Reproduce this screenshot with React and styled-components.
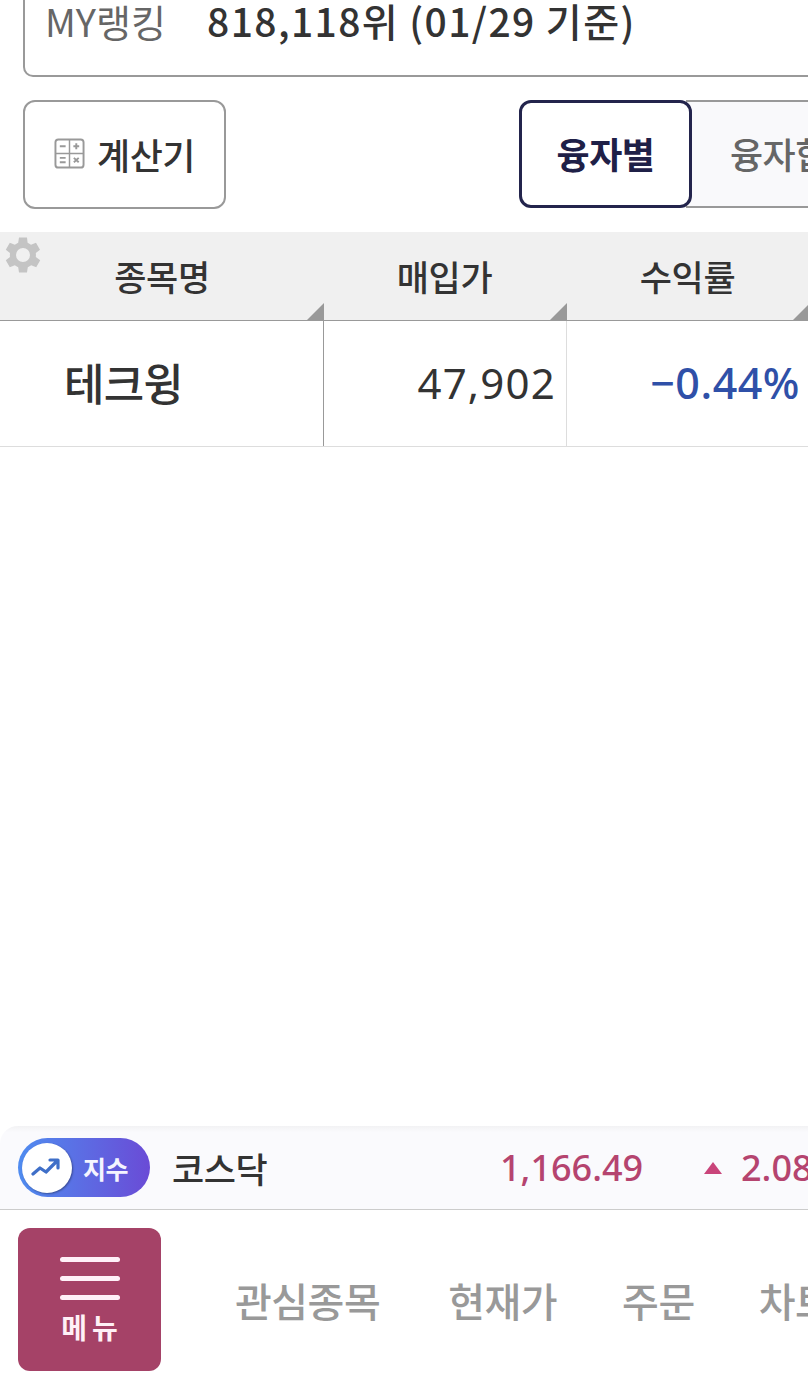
import React from "react";
import styled, { createGlobalStyle } from "styled-components";

const Global = createGlobalStyle`
  html, body { margin: 0; padding: 0; background: #fff; }
  * { box-sizing: border-box; }
  body { font-family: "Noto Sans CJK KR", "Noto Sans", sans-serif; color: #333; }
`;
const Page = styled.div`
  width: 808px; height: 1389px; overflow: hidden; display: flex; flex-direction: column; background: #fff;
`;
const RankBox = styled.div`
  width: 820px; height: 77px; margin-left: 23px; flex: none;
  border: 2px solid #999; border-top: none; border-radius: 0 0 10px 10px;
  display: flex; align-items: flex-start; padding-left: 20px; line-height: 41px;
`;
const RankLabel = styled.span`
  flex: none; font-size: 38px; color: #666; width: 162px; letter-spacing: 0; white-space: nowrap;
`;
const RankValue = styled.span`
  font-size: 39px; font-weight: 500; color: #333; white-space: nowrap; letter-spacing: 1.4px;
`;
const Controls = styled.div`
  flex: none; height: 109px; margin-top: 23px; padding-left: 23px;
  display: flex; justify-content: space-between; align-items: stretch; width: 808px;
`;
const CalcButton = styled.div`
  width: 203px; border: 2px solid #999; border-radius: 12px; display: flex; align-items: center; justify-content: center; gap: 12px;
  padding-bottom: 2px; font-size: 36px; font-weight: 500; color: #333; letter-spacing: -0.5px; white-space: nowrap;
`;
const Tabs = styled.div`
  width: 289px; display: flex; overflow: hidden; height: 108px;
`;
const Tab = styled.div`
  flex: none; width: ${p => p.$active ? 173 : 200}px; display: flex; align-items: center;
  justify-content: ${p => p.$active ? "center" : "flex-start"};
  padding-bottom: 2px; font-size: 36px; letter-spacing: -0.5px; white-space: nowrap;
  font-weight: ${p => p.$active ? 700 : 500};
  color: ${p => p.$active ? "#1f2047" : "#666"};
  background: ${p => p.$active ? "#fff" : "#f9f9fb"};
  border: ${p => p.$active ? "3px solid #23244c" : "2px solid #999"};
  border-radius: ${p => p.$active ? "12px" : "0"};
  ${p => !p.$active && "border-left: none; border-right: none; margin-left: -6px; padding-left: 44px;"}
  position: relative; z-index: ${p => p.$active ? 1 : 0};
`;
const Grid = styled.div`
  display: grid; grid-template-columns: 324px 243px 243px; width: 810px;
`;
const HeadRow = styled(Grid)`
  flex: none; margin-top: 23px; height: 89px; background: #f0f0f0; border-bottom: 1px solid #999;
`;
const HeadCell = styled.div`
  position: relative; display: flex; justify-content: center; padding-top: 20px; padding-right: ${p => p.$pr || 0}px;
  font-size: 35px; font-weight: 500; line-height: 48px; color: #333; letter-spacing: -0.4px;
`;
const Corner = styled.i`
  position: absolute; right: 0; bottom: 0; width: 0; height: 0; border-style: solid;
  border-width: 0 0 17px 17px; border-color: transparent transparent #999 transparent;
`;
const Gear = styled.svg`
  position: absolute; left: 5px; top: 5px; width: 36px; height: 36px; fill: #c4c4c4;
`;
const BodyRow = styled(Grid)`
  flex: none; height: 126px; border-bottom: 1px solid #ddd;
`;
const NameCell = styled.div`
  border-right: 1px solid #999; display: flex; align-items: center; padding-left: 64px; padding-bottom: 3px;
  font-size: 44px; font-weight: 500; color: #333; letter-spacing: -0.8px; white-space: nowrap;
`;
const NumCell = styled.div`
  display: flex; align-items: center; justify-content: flex-end; padding-bottom: 3px; padding-right: ${p => p.$pr}px;
  font-size: ${p => p.$size}px; color: ${p => p.$color}; border-right: 1px solid ${p => p.$line}; font-weight: ${p => p.$weight};
  letter-spacing: ${p => p.$ls}; white-space: nowrap; font-family: "Noto Sans", sans-serif;
`;
const Spacer = styled.div`flex: 1;`;
const Ticker = styled.div`
  flex: none; height: 84px; background: linear-gradient(180deg, #f2f2f4 0, #fafafd 6px); border-bottom: 1px solid #ccc;
  border-top-left-radius: 18px;
  display: flex; align-items: center; padding-left: 18px; white-space: nowrap; width: 808px; overflow: hidden;
`;
const IndexPill = styled.div`
  flex: none; width: 132px; height: 59px; border-radius: 30px; background: linear-gradient(90deg, #4f8cf0, #6a4bd6);
  display: flex; align-items: center; padding-left: 4px; gap: 11px; color: #f4f4ff; font-size: 25px; font-weight: 700; letter-spacing: -0.5px;
`;
const IconDisc = styled.div`
  flex: none; width: 50px; height: 50px; border-radius: 50%; background: #fff; display: flex; align-items: center; justify-content: center;
  box-shadow: 1px 1px 2px rgba(0,0,0,.35);
`;
const TickerName = styled.span`
  flex: none; width: 328px; margin-left: 22px; font-size: 35px; font-weight: 500; color: #333; letter-spacing: -0.5px;
`;
const TickerValue = styled.span`
  flex: none; width: ${p => p.$w}px; font-size: 36px; font-weight: 500; color: #b5446f; font-family: "Noto Sans", sans-serif;
`;
const UpArrow = styled.i`
  flex: none; width: 0; height: 0; border-style: solid; border-width: 0 9px 12px 9px; border-color: transparent transparent #c9447a transparent; margin-right: 19px;
`;
const Nav = styled.div`
  flex: none; height: 179px; display: flex; align-items: center; padding-left: 18px; white-space: nowrap; width: 808px; overflow: hidden;
`;
const MenuButton = styled.div`
  flex: none; width: 143px; height: 143px; border-radius: 12px; background: #a54267; display: flex; flex-direction: column; align-items: center;
  padding-top: 29px; color: #fff0f6;
`;
const MenuBar = styled.span`
  display: block; width: 60px; height: 5px; border-radius: 3px; background: #fff0f8; margin-bottom: 14px;
`;
const MenuLabel = styled.span`
  font-size: 28px; font-weight: 700; line-height: 32px; letter-spacing: 5px; margin-top: -3px; padding-left: 5px;
`;
const NavItem = styled.span`
  flex: none; margin-left: ${p => p.$ml}px; font-size: 40px; font-weight: 500; color: #999; letter-spacing: -0.5px;
`;

const GearPath = "M19.4 13a7.5 7.5 0 0 0 0-2l2.1-1.6-2-3.5-2.5 1a7.6 7.6 0 0 0-1.7-1L15 3.2h-4l-.4 2.7a7.6 7.6 0 0 0-1.7 1l-2.5-1-2 3.5L6.5 11a7.5 7.5 0 0 0 0 2l-2.1 1.6 2 3.5 2.5-1a7.6 7.6 0 0 0 1.7 1l.4 2.7h4l.4-2.7a7.6 7.6 0 0 0 1.7-1l2.5 1 2-3.5zM13 15.5a3.5 3.5 0 1 1 0-7 3.5 3.5 0 0 1 0 7z";

export default function App() {
  return (
    <Page>
      <Global />
      <RankBox>
        <RankLabel>MY랭킹</RankLabel>
        <RankValue>818,118위 (01/29 기준)</RankValue>
      </RankBox>
      <Controls>
        <CalcButton>
          <svg width="31" height="31" viewBox="0 0 32 32" fill="none" stroke="#999" strokeWidth="2">
            <rect x="1.5" y="1.5" width="29" height="29" rx="3" />
            <path d="M16 1.5v29M1.5 16h29" strokeWidth="1.5" />
            <path d="M6 8.5h6M20 8.5h6M23 5.5v6M6 20.5h6M6 25h6M20.5 20.5l5 4.5M25.5 20.5l-5 4.5" />
          </svg>
          계산기
        </CalcButton>
        <Tabs>
          <Tab $active>융자별</Tab>
          <Tab>융자합</Tab>
        </Tabs>
      </Controls>
      <HeadRow>
        <HeadCell>
          <Gear viewBox="4 3 18 18"><path d={GearPath} fillRule="evenodd" /></Gear>
          종목명<Corner />
        </HeadCell>
        <HeadCell $pr={2}>매입가<Corner /></HeadCell>
        <HeadCell $pr={2}>수익률<Corner /></HeadCell>
      </HeadRow>
      <BodyRow>
        <NameCell>테크윙</NameCell>
        <NumCell $pr={10} $size={42} $weight={400} $color="#333" $line="#ddd" $ls="1.2px">47,902</NumCell>
        <NumCell $pr={9} $size={43} $weight={500} $color="#2f50a8" $line="transparent" $ls="0.5px">−0.44%</NumCell>
      </BodyRow>
      <Spacer />
      <Ticker>
        <IndexPill>
          <IconDisc>
            <svg width="32" height="24" viewBox="0 0 32 24" fill="none" stroke="#3f6fc8" strokeWidth="3.2" strokeLinecap="round" strokeLinejoin="round">
              <path d="M2 18l7-6 6 4 11-11M19 4h8v8" />
            </svg>
          </IconDisc>
          지수
        </IndexPill>
        <TickerName>코스닥</TickerName>
        <TickerValue $w={204}>1,166.49</TickerValue>
        <UpArrow />
        <TickerValue $w={100}>2.08</TickerValue>
      </Ticker>
      <Nav>
        <MenuButton>
          <MenuBar /><MenuBar /><MenuBar />
          <MenuLabel>메뉴</MenuLabel>
        </MenuButton>
        <NavItem $ml={74}>관심종목</NavItem>
        <NavItem $ml={68}>현재가</NavItem>
        <NavItem $ml={65}>주문</NavItem>
        <NavItem $ml={64}>차트</NavItem>
      </Nav>
    </Page>
  );
}
